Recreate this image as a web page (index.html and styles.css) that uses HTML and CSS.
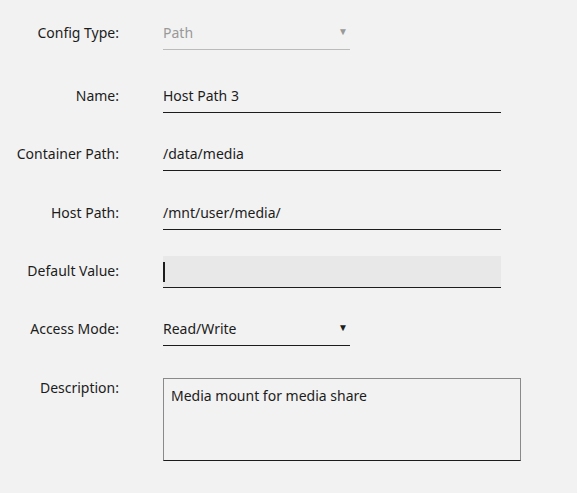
FILE: index.html
```html
<!DOCTYPE html>
<html lang="en">

<head>
    <meta charset="UTF-8">
    <meta name="viewport" content="width=device-width, initial-scale=1.0">
    <title>Path</title>
    <link rel="stylesheet" href="styles.css">
</head>

<body>
    <div class="form">

        <div class="row first">
            <div class="label">Config Type:</div>
            <div class="field select disabled">
                <span class="value">Path</span>
                <span class="caret">&#9660;</span>
            </div>
        </div>

        <div class="row">
            <div class="label">Name:</div>
            <div class="field text">Host Path 3</div>
        </div>

        <div class="row wide">
            <div class="label">Container Path:</div>
            <div class="field text">/data/media</div>
        </div>

        <div class="row">
            <div class="label">Host Path:</div>
            <div class="field text">/mnt/user/media/</div>
        </div>

        <div class="row">
            <div class="label">Default Value:</div>
            <div class="field text focus"><span class="cursor"></span></div>
        </div>

        <div class="row access">
            <div class="label">Access Mode:</div>
            <div class="field select">
                <span class="value">Read/Write</span>
                <span class="caret">&#9660;</span>
            </div>
        </div>

        <div class="row desc">
            <div class="label">Description:</div>
            <div class="area">Media mount for media share</div>
        </div>

    </div>
</body>

</html>
```

FILE: styles.css
```css
* {
    margin: 0;
    padding: 0;
    box-sizing: border-box;
}

html,
body {
    width: 100%;
    height: 100%;
    background-color: #f2f2f2;
}

body {
    font-family: "Noto Sans", "Open Sans", sans-serif;
    font-size: 14px;
    color: #1c1c1c;
}

.form {
    padding-top: 18px;
}

.row {
    display: flex;
    align-items: center;
    margin-bottom: 26px;
}

.row.first {
    margin-bottom: 31px;
}

.row.wide {
    margin-bottom: 27px;
}

.row.access {
    margin-bottom: 32px;
}

.row.desc {
    align-items: flex-start;
}

.label {
    width: 119px;
    text-align: right;
    margin-right: 44px;
    padding-bottom: 4px;
}

.field {
    height: 32px;
    display: flex;
    align-items: center;
    padding-bottom: 3px;
    border-bottom: 1px solid #1c1c1c;
}

.text {
    width: 338px;
}

.focus {
    background-color: #e8e8e8;
    padding-bottom: 0;
}

.cursor {
    display: inline-block;
    width: 2px;
    height: 20px;
    background-color: #1c1c1c;
}

.select {
    width: 187px;
    justify-content: space-between;
}

.select .caret {
    font-size: 10px;
    margin-right: 2px;
    margin-top: -2px;
}

.disabled {
    color: #999;
    border-bottom-color: #bbb;
}

.desc .label {
    padding-top: 0;
}

.area {
    width: 358px;
    height: 83px;
    border: 1px solid #8a8a8a;
    border-bottom-color: #1c1c1c;
    padding: 7px 7px;
}
```
